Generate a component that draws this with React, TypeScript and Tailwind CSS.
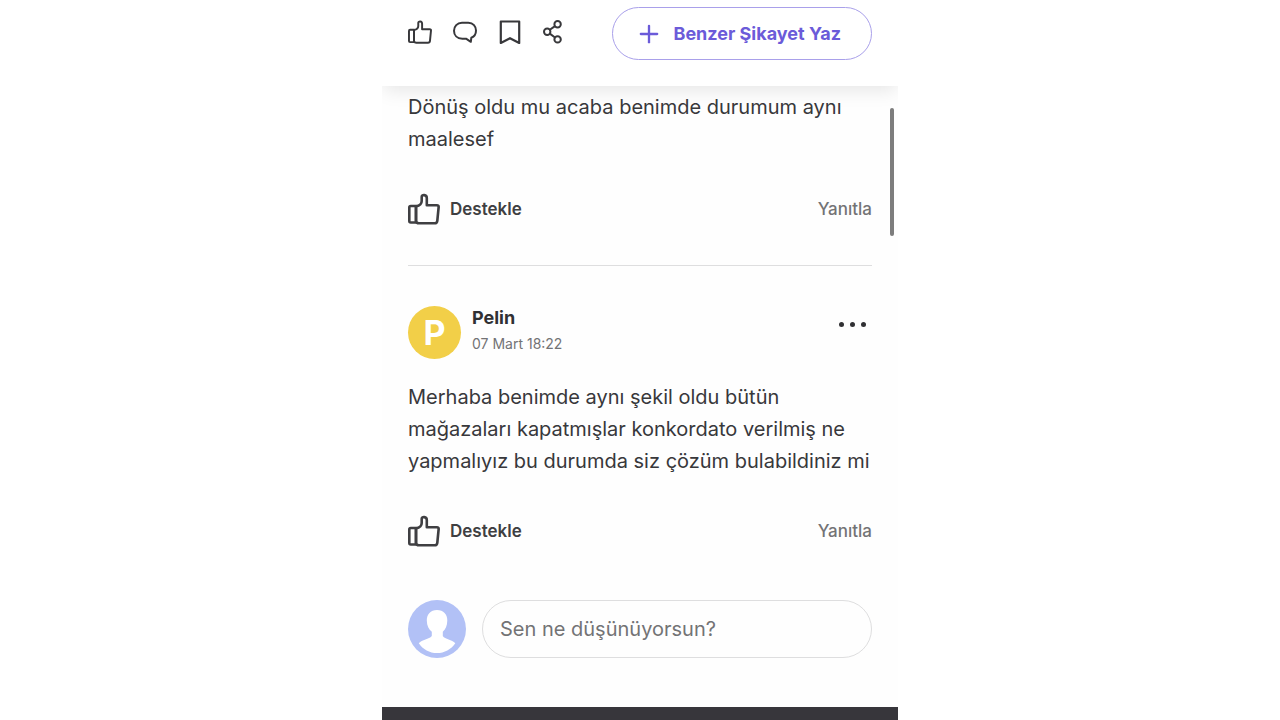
import { Plus } from 'lucide-react';

const ThumbIcon = ({ className }: { className: string }) => (
  <svg
    viewBox="0 0 32 32"
    className={className}
    fill="none"
    stroke="currentColor"
    strokeWidth="2.6"
    strokeLinejoin="round"
    aria-hidden="true"
  >
    <path d="M8 13H2.8Q1.3 13 1.3 14.5V28Q1.3 29.5 2.8 29.5H8Z" />
    <path d="M8 13.4C11.2 12.8 13.7 10.8 13.7 8V3.8C13.7 1.3 18.8 1.4 18.8 5V12.3H28.8Q31 12.4 30.6 14.5L29.3 27.8Q29 30.3 26.6 30.3H11.2Q8 30.3 8 27.8Z" />
  </svg>
);

const CommentIcon = () => (
  <svg viewBox="0 0 24 24" className="size-6" fill="none" stroke="currentColor" strokeWidth="2" strokeLinejoin="round" aria-hidden="true">
    <path d="M9 2.8H15.3C20.2 2.8 23 6.4 23 10.6C23 14.2 21 16.8 18.3 17.8L17.8 21.8L13 18.7H9.3C4 18.7 1 15.2 1 10.8C1 6.3 4.2 2.8 9 2.8Z" />
  </svg>
);

const BookmarkIcon = () => (
  <svg viewBox="0 0 24 24" className="size-6" fill="none" stroke="currentColor" strokeWidth="2.2" strokeLinejoin="round" aria-hidden="true">
    <path d="M2.8 1.5H21.2V23L12 18.2L2.8 23Z" />
  </svg>
);

const ShareIcon = () => (
  <svg viewBox="0 0 24 24" className="size-6" fill="none" stroke="currentColor" strokeWidth="2" aria-hidden="true">
    <circle cx="14.6" cy="4.2" r="3.2" />
    <circle cx="4.2" cy="11.7" r="3.2" />
    <circle cx="14.6" cy="19.4" r="3.2" />
    <path d="M6.8 9.8L12 6.1M6.8 13.6L12 17.5" />
  </svg>
);

const CommentActions = () => (
  <div className="mt-[38px] flex items-center justify-between text-[17px] leading-8">
    <button type="button" className="flex items-center gap-[10px] font-semibold text-[#3f3f42]">
      <ThumbIcon className="size-8" />
      Destekle
    </button>
    <button type="button" className="font-medium text-[#737375]">
      Yanıtla
    </button>
  </div>
);

const App = () => {
  return (
    <div className="min-h-screen bg-white font-[Inter,'Noto_Sans',sans-serif]">
      <div className="relative mx-auto flex min-h-screen w-full max-w-[516px] flex-col overflow-hidden bg-[#fefefe]">
        <header className="flex items-start justify-between bg-white px-[26px] pt-[7px] pb-[26px] shadow-[0_6px_18px_-2px_rgba(0,0,0,0.1)]">
          <div className="flex gap-[21px] pt-[13px] text-[#38383b]">
            <button type="button" aria-label="Destekle">
              <ThumbIcon className="size-6" />
            </button>
            <button type="button" aria-label="Yorumlar">
              <CommentIcon />
            </button>
            <button type="button" aria-label="Kaydet">
              <BookmarkIcon />
            </button>
            <button type="button" aria-label="Paylaş">
              <ShareIcon />
            </button>
          </div>
          <button
            type="button"
            className="flex h-[53px] items-center gap-[10px] rounded-full border border-[#a9a0ea] pr-[30px] pl-[22px] text-[18px] font-bold text-[#6b5bd9]"
          >
            <Plus className="size-7" strokeWidth={2} />
            Benzer Şikayet Yaz
          </button>
        </header>

        <main className="flex-1 px-[26px] pb-12">
          <article className="border-b border-[#dededf] pt-[5px] pb-10">
            <p className="text-[20px] leading-8 text-[#38383b]">
              Dönüş oldu mu acaba benimde durumum aynı maalesef
            </p>
            <CommentActions />
          </article>

          <article className="pt-10">
            <div className="flex items-start justify-between">
              <div className="flex gap-[11px]">
                <div className="flex size-[53px] items-center justify-center rounded-full bg-[#f2cf48] text-[34px] font-bold text-white">
                  P
                </div>
                <div>
                  <h2 className="text-[18px] leading-6 font-bold text-[#303033]">Pelin</h2>
                  <time className="block text-[14px] leading-7 text-[#737375]">07 Mart 18:22</time>
                </div>
              </div>
              <button type="button" aria-label="Diğer" className="flex gap-[6px] px-[6px] py-4 text-[#303033]">
                <span className="size-[5px] rounded-full bg-current" />
                <span className="size-[5px] rounded-full bg-current" />
                <span className="size-[5px] rounded-full bg-current" />
              </button>
            </div>
            <p className="mt-[22px] text-[20px] leading-8 text-[#38383b]">
              Merhaba benimde aynı şekil oldu bütün mağazaları kapatmışlar konkordato verilmiş ne yapmalıyız bu durumda siz çözüm bulabildiniz mi
            </p>
            <CommentActions />
          </article>

          <form className="mt-[53px] flex items-center gap-4">
            <svg viewBox="0 0 58 58" className="size-[58px] shrink-0" aria-hidden="true">
              <circle cx="29" cy="29" r="29" fill="#b2c1f6" />
              <path
                fill="#fff"
                d="M29 10C35.5 10 39.4 14.5 39.3 20.5C39.2 26 37.5 29.5 34.8 31.8V36C37 39.5 44 39.5 47.3 43.2C43 49.5 36.5 53 29 53C21.5 53 15 49.5 10.8 43.2C14 39.5 21 39.5 23.8 36V31.8C20.8 29.5 18.9 26 18.8 20.5C18.7 14.5 22.5 10 29 10Z"
              />
            </svg>
            <input
              type="text"
              aria-label="Yorumun"
              placeholder="Sen ne düşünüyorsun?"
              className="h-[58px] min-w-0 flex-1 rounded-full border border-[#dededf] bg-transparent px-[17px] text-[20px] text-[#38383b] outline-none placeholder:text-[#737375]"
            />
          </form>
        </main>

        <footer className="h-[13px] bg-[#37363b]" />

        <div className="absolute top-[108px] right-1 h-32 w-1 rounded-full bg-[#7d7d7d]" />
      </div>
    </div>
  );
};

export default App;
